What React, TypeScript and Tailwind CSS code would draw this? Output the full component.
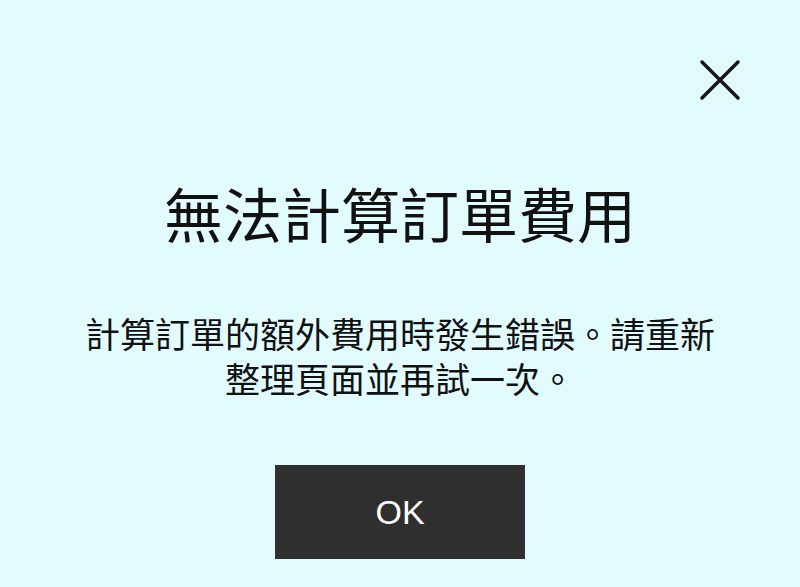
import React from "react";

export default function App() {
  return (
    <div
      className="w-[800px] h-[587px] bg-[#e2fbff] flex flex-col items-center overflow-hidden"
      style={{ fontFamily: '"Noto Sans CJK TC", "Noto Sans", sans-serif' }}
    >
      <div className="w-full flex justify-end pt-[58px] pr-[58px]">
        <button className="w-[44px] h-[44px]" aria-label="close">
          <svg width="44" height="44" viewBox="0 0 44 44">
            <path d="M4 4 L40 40 M40 4 L4 40" stroke="#111" strokeWidth="3.5" strokeLinecap="round" />
          </svg>
        </button>
      </div>
      <h1 className="mt-[76px] text-[59px] leading-[70px] text-[#111] font-normal">無法計算訂單費用</h1>
      <p className="mt-[62px] w-[650px] text-center text-[35px] leading-[45px] text-[#111]">
        計算訂單的額外費用時發生錯誤。請重新整理頁面並再試一次。
      </p>
      <button
        className="mt-[65px] w-[250px] h-[94px] bg-[#302f2f] text-white text-[34px]"
        style={{ fontFamily: '"Liberation Sans", Arial, sans-serif' }}
      >
        OK
      </button>
    </div>
  );
}
